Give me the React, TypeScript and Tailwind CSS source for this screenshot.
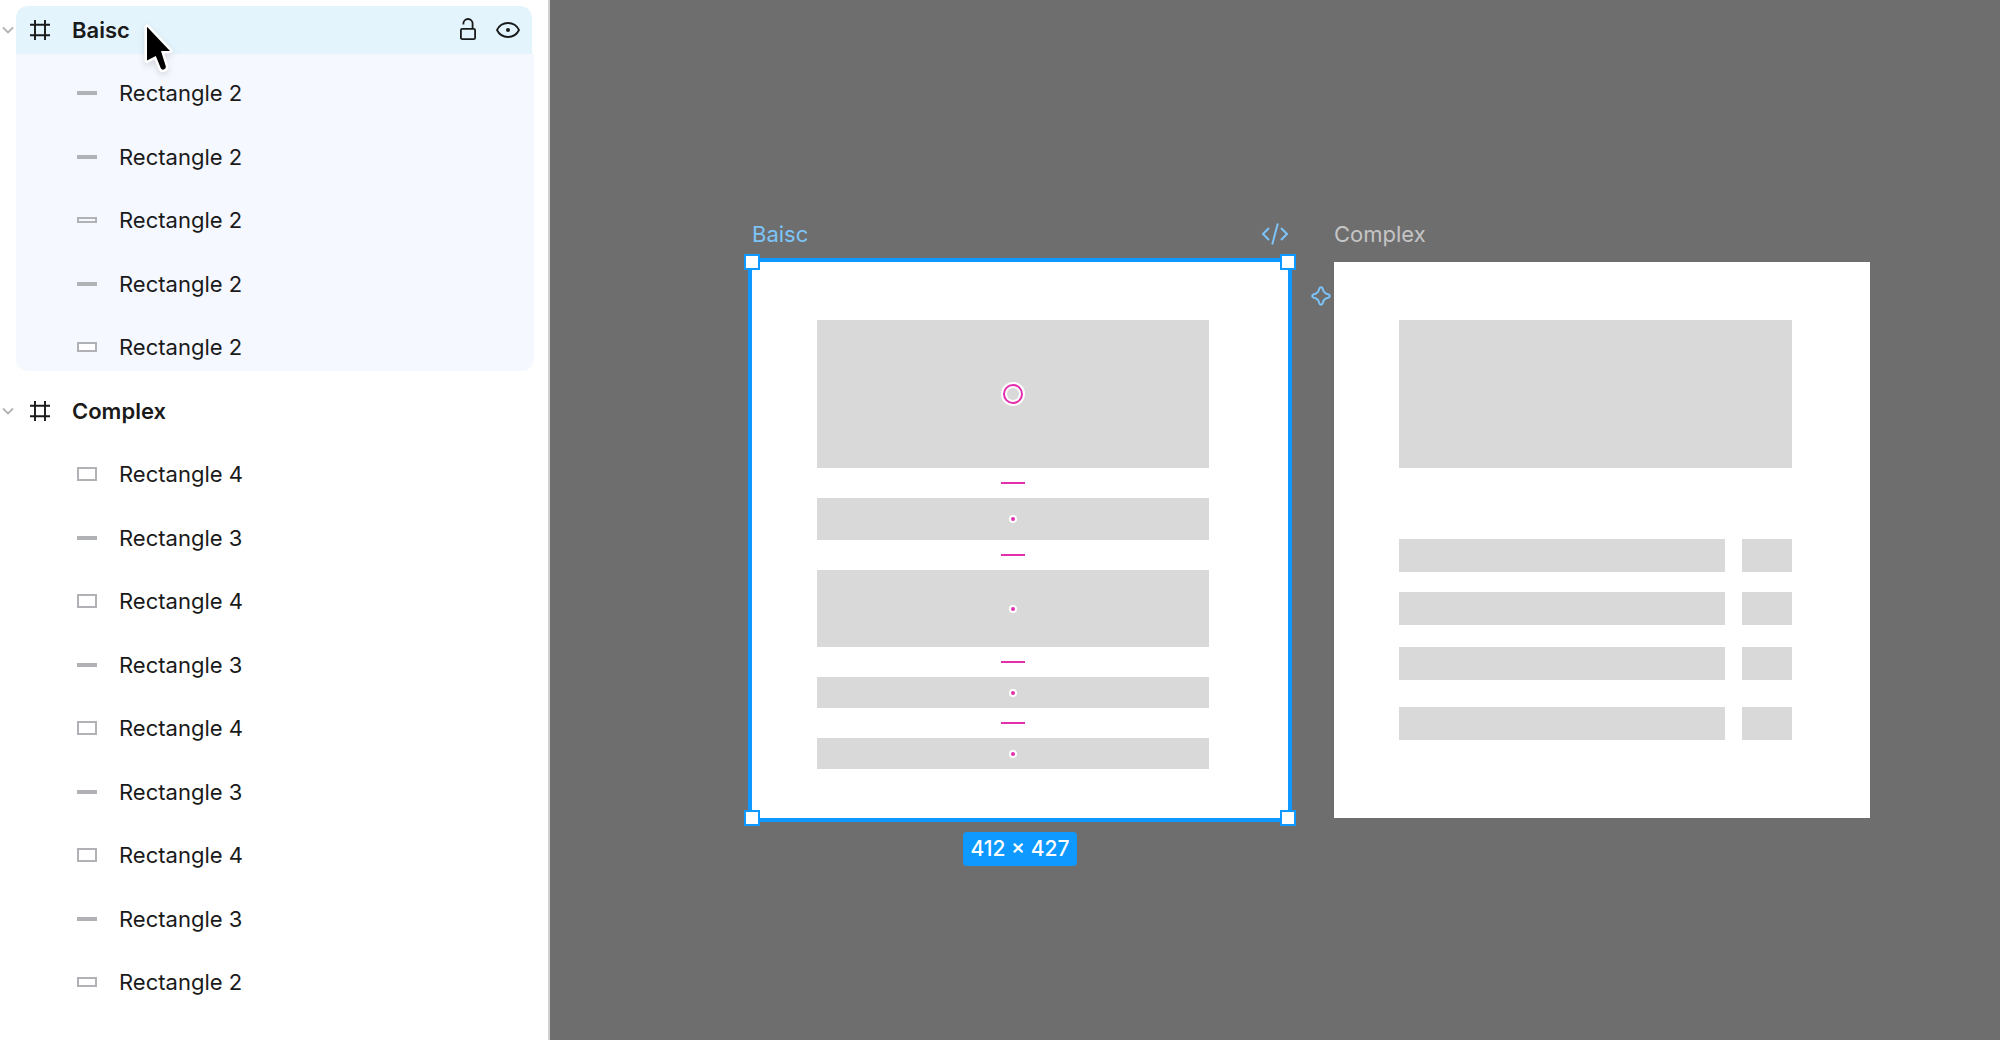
import clsx from "clsx";

type Shape = "line" | "thin" | "short" | "box";

interface Layer {
  name: string;
  shape: Shape;
}

interface LayerGroupProps {
  name: string;
  layers: Layer[];
  selected?: boolean;
}

const BASIC_LAYERS: Layer[] = [
  { name: "Rectangle 2", shape: "line" },
  { name: "Rectangle 2", shape: "line" },
  { name: "Rectangle 2", shape: "thin" },
  { name: "Rectangle 2", shape: "line" },
  { name: "Rectangle 2", shape: "short" },
];

const COMPLEX_LAYERS: Layer[] = [
  { name: "Rectangle 4", shape: "box" },
  { name: "Rectangle 3", shape: "line" },
  { name: "Rectangle 4", shape: "box" },
  { name: "Rectangle 3", shape: "line" },
  { name: "Rectangle 4", shape: "box" },
  { name: "Rectangle 3", shape: "line" },
  { name: "Rectangle 4", shape: "box" },
  { name: "Rectangle 3", shape: "line" },
  { name: "Rectangle 2", shape: "short" },
];

const SHAPE_CLASS: Record<Shape, string> = {
  line: "h-1 bg-current",
  thin: "h-1.5 border-2 border-current",
  short: "h-2.5 border-2 border-current bg-white",
  box: "h-3.5 border-2 border-current",
};

function ChevronIcon() {
  return (
    <svg className="w-4 h-4" viewBox="0 0 16 16" fill="none" stroke="#b3b3b3" strokeWidth="1.8">
      <path d="M3 5.5l5 5 5-5" />
    </svg>
  );
}

function FrameIcon() {
  return (
    <svg className="w-5 h-5 shrink-0" viewBox="0 0 20 20" fill="none" stroke="currentColor" strokeWidth="1.9">
      <path d="M5 0v20M15 0v20M0 4.8h20M0 15.2h20" />
    </svg>
  );
}

function LockIcon() {
  return (
    <svg className="w-5 h-6" viewBox="0 0 20 24" fill="none" stroke="currentColor" strokeWidth="1.8">
      <rect x="2.900" y="10.900" width="14.200" height="10.200" rx="1.400" />
      <path d="M5.400 6.500V5.600a4.600 4.600 0 0 1 9.200 0V10.500" />
    </svg>
  );
}

function EyeIcon() {
  return (
    <svg className="w-6 h-6" viewBox="0 0 24 24" fill="none" stroke="currentColor" strokeWidth="1.8">
      <path d="M1 12C3.200 7.400 7 5 12 5s8.800 2.400 11 7c-2.200 4.600-6 7-11 7s-8.800-2.400-11-7z" strokeLinejoin="round" />
      <circle cx="12" cy="12" r="2" fill="currentColor" stroke="none" />
    </svg>
  );
}

function CodeIcon() {
  return (
    <svg className="w-7 h-6" viewBox="0 0 28 24" fill="none" stroke="currentColor" strokeWidth="2">
      <path d="M9 6l-6 6 6 6M21 6l6 6-6 6M17.800 1.500L12.200 22.500" />
    </svg>
  );
}

function SparkleIcon() {
  return (
    <svg className="w-5 h-5" viewBox="0 0 20 20" fill="none" stroke="currentColor" strokeWidth="2" strokeLinejoin="round">
      <path d="M10 1.200Q11.400 1.200 11.800 2.900Q12.600 7.400 17.100 8.200Q18.800 8.600 18.800 10Q18.800 11.400 17.100 11.800Q12.600 12.600 11.800 17.100Q11.400 18.800 10 18.800Q8.600 18.800 8.200 17.100Q7.400 12.600 2.900 11.800Q1.200 11.400 1.200 10Q1.200 8.600 2.900 8.200Q7.400 7.400 8.200 2.900Q8.600 1.200 10 1.200z" />
    </svg>
  );
}

function Cursor() {
  return (
    <svg className="absolute left-[138px] top-4 w-10 h-[60px] drop-shadow-md pointer-events-none" viewBox="0 0 40 60">
      <path
        d="M9 10.800L32 35H23L27.700 50A2.700 2.700 0 0 1 22.800 52.200L17.800 40L9 44.500z"
        fill="#000"
        stroke="#fff"
        strokeWidth="5"
        strokeLinejoin="round"
        paintOrder="stroke"
      />
    </svg>
  );
}

function LayerGroup({ name, layers, selected = false }: LayerGroupProps) {
  return (
    <section>
      <div className="flex items-center">
        <button aria-label={`Collapse ${name}`} className="w-4 shrink-0">
          <ChevronIcon />
        </button>
        <div className={clsx("flex flex-1 items-center h-12 pl-3.5 pr-3 rounded-t-xl", selected && "bg-[#e3f4fd]")}>
          <FrameIcon />
          <span className="flex-1 ml-[22px] font-semibold">{name}</span>
          {selected && (
            <div className="flex items-center gap-[18px]">
              <button aria-label="Lock">
                <LockIcon />
              </button>
              <button aria-label="Hide">
                <EyeIcon />
              </button>
            </div>
          )}
        </div>
      </div>
      <ul className={clsx("flex flex-col ml-4 -mr-0.5 rounded-b-xl", selected && "bg-[#f5f8ff]")}>
        {layers.map((layer, i) => (
          <li key={i} className="flex items-center h-12 pl-[61px] odd:mt-[15px] even:mt-4">
            <span className={clsx("w-5 text-[#b0b2b6]", SHAPE_CLASS[layer.shape])} />
            <span className="ml-[22px]">{layer.name}</span>
          </li>
        ))}
      </ul>
    </section>
  );
}

function Handle({ className }: { className: string }) {
  return <span className={clsx("absolute w-4 h-4 border-2 border-[#0d99ff] bg-white", className)} />;
}

function Dot() {
  return <span className="w-2 h-2 rounded-full border-2 border-white bg-[#e32fae]" />;
}

function Spacer() {
  return (
    <div className="flex items-center justify-center h-[30px]">
      <span className="w-6 h-0.5 bg-[#e32fae]" />
    </div>
  );
}

const BLOCK = "flex items-center justify-center bg-[#d9d9d9]";

function BasicFrame() {
  return (
    <article className="flex-1">
      <header className="flex items-center justify-between h-8 mb-3 text-[#7cc4f8]">
        <h2>Baisc</h2>
        <CodeIcon />
      </header>
      <div className="relative h-[556px] pt-[58px] pl-[65px] pr-[79px] bg-white outline-4 outline-[#0d99ff]">
        <div className={clsx(BLOCK, "h-[148px]")}>
          <span className="flex w-6 h-6 rounded-full bg-white items-center justify-center">
            <span className="flex w-5 h-5 rounded-full border-2 border-[#e32fae] items-center justify-center">
              <span className="w-3 h-3 rounded-full bg-[#d9d9d9]" />
            </span>
          </span>
        </div>
        <Spacer />
        <div className={clsx(BLOCK, "h-[42px]")}>
          <Dot />
        </div>
        <Spacer />
        <div className={clsx(BLOCK, "h-[77px]")}>
          <Dot />
        </div>
        <Spacer />
        <div className={clsx(BLOCK, "h-[31px]")}>
          <Dot />
        </div>
        <Spacer />
        <div className={clsx(BLOCK, "h-[31px]")}>
          <Dot />
        </div>
        <Handle className="-left-2 -top-2" />
        <Handle className="-right-2 -top-2" />
        <Handle className="-left-2 -bottom-2" />
        <Handle className="-right-2 -bottom-2" />
        <span className="absolute left-full top-6 ml-[23px] text-[#7cc4f8]">
          <SparkleIcon />
        </span>
      </div>
      <div className="flex justify-center mt-[14px]">
        <span className="flex items-center h-[34px] px-2 rounded bg-[#0d99ff] text-white text-[21px] font-medium">
          412 × 427
        </span>
      </div>
    </article>
  );
}

function ComplexRow({ className }: { className: string }) {
  return (
    <div className={clsx("flex gap-[17px] h-[33px]", className)}>
      <div className="flex-1 bg-[#d9d9d9]" />
      <div className="w-[50px] bg-[#d9d9d9]" />
    </div>
  );
}

function ComplexFrame() {
  return (
    <article className="flex-1">
      <header className="flex items-center h-8 mb-3 text-[#c5c5c5]">
        <h2>Complex</h2>
      </header>
      <div className="h-[556px] pt-[58px] pl-[65px] pr-[78px] bg-white">
        <div className="h-[148px] bg-[#d9d9d9]" />
        <ComplexRow className="mt-[71px]" />
        <ComplexRow className="mt-5" />
        <ComplexRow className="mt-[22px]" />
        <ComplexRow className="mt-[27px]" />
      </div>
    </article>
  );
}

export default function App() {
  return (
    <div className="flex min-h-screen font-['Inter',sans-serif] text-[22px] leading-8 text-[#1a1a1a]">
      <aside className="relative flex flex-col gap-4 w-[550px] shrink-0 pt-1.5 pr-4 bg-white border-r-2 border-[#d0d0d0]">
        <LayerGroup name="Baisc" layers={BASIC_LAYERS} selected />
        <LayerGroup name="Complex" layers={COMPLEX_LAYERS} />
        <Cursor />
      </aside>
      <main className="flex flex-1 items-start gap-[46px] pt-[218px] pl-[202px] pr-[130px] bg-[#6e6e6f]">
        <BasicFrame />
        <ComplexFrame />
      </main>
    </div>
  );
}
